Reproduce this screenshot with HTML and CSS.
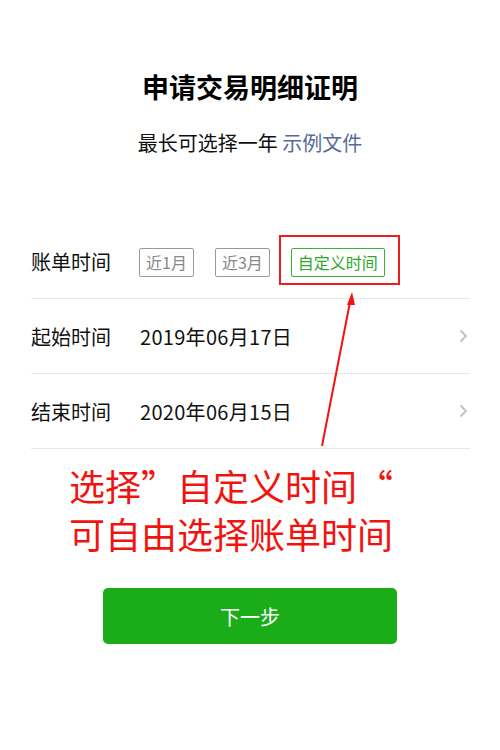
FILE: index.html
```html
<!DOCTYPE html>
<html lang="zh-CN">
<head>
    <meta charset="UTF-8">
    <meta name="viewport" content="width=device-width, initial-scale=1.0">
    <title>申请交易明细证明</title>
    <link rel="stylesheet" href="styles.css">
</head>
<body>
    <div class="page">
        <div class="header">
            <h1 class="title">申请交易明细证明</h1>
            <p class="subtitle">最长可选择一年 <a class="link" href="#">示例文件</a></p>
        </div>

        <div class="form-list">
            <div class="row">
                <span class="label">账单时间</span>
                <div class="ranges">
                    <button class="range-btn">近1月</button>
                    <button class="range-btn">近3月</button>
                    <div class="range-mark">
                        <button class="range-btn active">自定义时间</button>
                        <span class="mark-box"></span>
                    </div>
                </div>
            </div>
            <div class="row">
                <span class="label">起始时间</span>
                <span class="value">2019年06月17日</span>
                <svg class="chevron" width="9" height="14" viewBox="0 0 9 14">
                    <polyline points="1.5,1.5 7,7 1.5,12.5" fill="none" stroke="#c4c4c8" stroke-width="2"/>
                </svg>
            </div>
            <div class="row">
                <span class="label">结束时间</span>
                <span class="value">2020年06月15日</span>
                <svg class="chevron" width="9" height="14" viewBox="0 0 9 14">
                    <polyline points="1.5,1.5 7,7 1.5,12.5" fill="none" stroke="#c4c4c8" stroke-width="2"/>
                </svg>
            </div>
        </div>

        <div class="note">
            <div>选择”自定义时间“</div>
            <div>可自由选择账单时间</div>
        </div>

        <div class="actions">
            <button class="next-btn">下一步</button>
        </div>

        <!-- pointer from the note up to the custom range button -->
        <svg class="pointer" width="500" height="750" viewBox="0 0 500 750">
            <line x1="322" y1="446" x2="350" y2="302" stroke="#f2130f" stroke-width="2"/>
            <polygon points="352,292 347,305 355,305" fill="#f2130f"/>
        </svg>
    </div>
</body>
</html>
```

FILE: styles.css
```css
body {
    margin: 0;
    background: #fff;
    color: #111;
    font-family: "Noto Sans CJK SC", "Noto Sans", sans-serif;
}

.page {
    position: relative;
    width: 500px;
    min-height: 750px;
}

.header {
    padding-top: 68px;
    text-align: center;
}

.title {
    margin: 0;
    font-size: 27px;
    line-height: 38px;
    font-weight: bold;
    color: #000;
}

.subtitle {
    margin: 22px 0 0;
    font-size: 20px;
    line-height: 30px;
}

.link {
    color: #576b95;
    text-decoration: none;
}

.form-list {
    margin: 66px 30px 0 31px;
}

.row {
    display: flex;
    align-items: center;
    height: 74px;
    border-bottom: 1px solid #e6e6e6;
}

.label {
    width: 108px;
    flex-shrink: 0;
    font-size: 20px;
}

.value {
    flex: 1;
    font-size: 20px;
    letter-spacing: 0.3px;
    padding-left: 1px;
}

.chevron {
    margin-right: 2px;
}

.ranges {
    display: flex;
    align-items: center;
    gap: 21px;
    margin-top: 2px;
}

.range-btn {
    height: 29px;
    padding: 0 6px;
    border: 1px solid #999;
    border-radius: 2px;
    background: #fff;
    color: #888;
    font-family: inherit;
    font-size: 16px;
    line-height: 27px;
}

.range-btn.active {
    border-color: #3bb33a;
    color: #2ea82d;
}

.range-mark {
    position: relative;
    display: flex;
}

.mark-box {
    position: absolute;
    top: -13px;
    left: -12px;
    right: -15px;
    bottom: -8px;
    border: 2px solid #ee1d1d;
    pointer-events: none;
}

.note {
    margin-top: 12px;
    padding-left: 69px;
    font-size: 36px;
    line-height: 48px;
    color: #f2130f;
}

.actions {
    display: flex;
    justify-content: center;
    margin-top: 31px;
}

.next-btn {
    width: 294px;
    height: 56px;
    border: none;
    border-radius: 5px;
    background: #1aad19;
    color: #fff;
    font-family: inherit;
    font-size: 20px;
}

.pointer {
    position: absolute;
    top: 0;
    left: 0;
    pointer-events: none;
}
```
